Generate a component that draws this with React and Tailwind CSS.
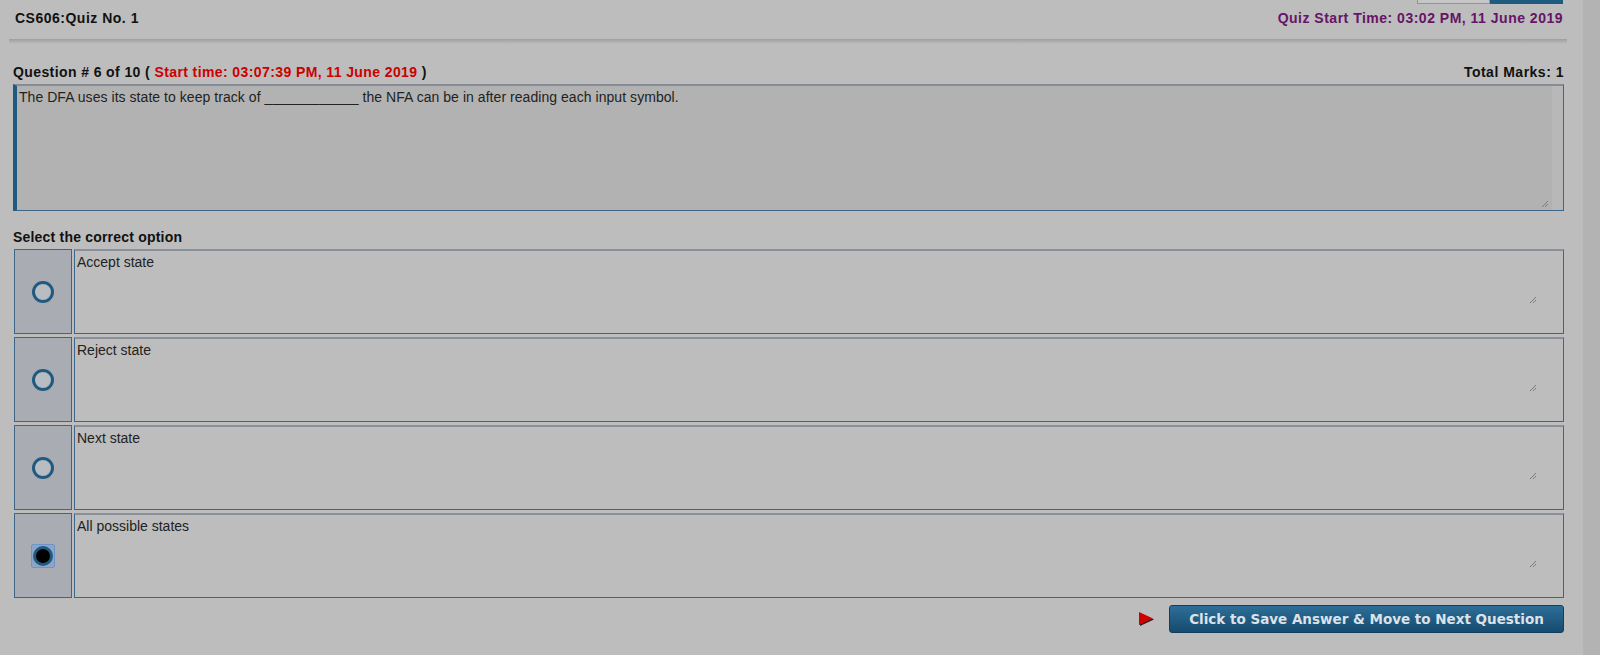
import React from 'react';

const options = ['Accept state', 'Reject state', 'Next state', 'All possible states'];

const Radio = ({ checked }) => {
    if (checked) {
        return (
            <div className="w-[24px] h-[24px] border border-[#6f94c9] bg-[#8ea6c6] rounded-[2px] flex items-center justify-center">
                <div className="w-[20px] h-[20px] rounded-full border-[3px] border-[#1f5a80] bg-black" />
            </div>
        );
    }
    return <div className="w-[22px] h-[22px] rounded-full border-[3px] border-[#1f5a80] bg-[#b9bcc0]" />;
};

const Grip = () => (
    <svg width="8" height="8" viewBox="0 0 8 8" className="absolute right-[26px] bottom-[29px]">
        <path d="M7 1 L1 7 M7 4 L4 7" stroke="#7a7a7a" strokeWidth="1" />
    </svg>
);

const App = () => {
    return (
        <div className="flex w-[1600px] h-[655px] overflow-hidden bg-[#bdbdbd] font-['Liberation_Sans',Arial,sans-serif] text-[14px] text-[#111]">
            <div className="w-[1583px] flex flex-col">
                {/* cut-off tabs at top */}
                <div className="flex justify-end pr-[20px] h-[4px]">
                    <div className="w-[73px] h-[4px] bg-[#c6c6c6] border border-t-0 border-[#8a96a3]" />
                    <div className="w-[73px] h-[4px] bg-[#1f5a80]" />
                </div>

                <div className="flex justify-between items-center pl-[15px] pr-[20px] mt-[6px] h-[16px] font-bold tracking-[0.5px]">
                    <span>CS606:Quiz No. 1</span>
                    <span className="text-[#661466]">Quiz Start Time: 03:02 PM, 11 June 2019</span>
                </div>

                <div className="ml-[9px] mt-[13px] w-[1558px] h-[5px] bg-gradient-to-b from-[#9f9f9f] to-[#bdbdbd]" />

                <div className="pl-[13px] pr-[19px] mt-[20px]">
                    <div className="flex justify-between items-center h-[16px] font-bold tracking-[0.4px]">
                        <span>
                            Question # 6 of 10 ( <span className="text-[#cc0000]">Start time: 03:07:39 PM, 11 June 2019</span> )
                        </span>
                        <span className="tracking-[0.5px]">Total Marks: 1</span>
                    </div>

                    <div className="relative mt-[4px] h-[127px] flex border-l-[4px] border-l-[#1f5a80] border-t-2 border-t-[#868c96] border-r border-b border-r-[#3d6688] border-b-[#3d6688]">
                        <div className="flex-1 bg-[#b2b2b2] px-[2px] pt-[3px] leading-[16px] tracking-[0.05px] text-[#222]">
                            The DFA uses its state to keep track of ____________ the NFA can be in after reading each input symbol.
                        </div>
                        <div className="w-[11px] bg-[#b8b8b8]" />
                        <svg width="8" height="8" viewBox="0 0 8 8" className="absolute right-[14px] bottom-[2px]">
                            <path d="M7 1 L1 7 M7 4 L4 7" stroke="#7a7a7a" strokeWidth="1" />
                        </svg>
                    </div>

                    <div className="mt-[18px] font-bold h-[16px] leading-[16px] tracking-[0.2px]">Select the correct option</div>

                    <div className="mt-[4px] flex flex-col gap-[3px] pl-[1px]">
                        {options.map((opt, i) => (
                            <div key={opt} className="flex gap-[2px] h-[85px]">
                                <div className="w-[58px] bg-[#a9adb3] border border-[#3d6688] flex items-center justify-center">
                                    <Radio checked={i === 3} />
                                </div>
                                <div className="relative flex-1 border border-[#3d6688] border-t-2 border-t-[#8a909a] px-[2px] pt-[3px] leading-[16px] text-[#222]">
                                    {opt}
                                    <Grip />
                                </div>
                            </div>
                        ))}
                    </div>

                    <div className="mt-[7px] flex justify-end items-center gap-[14px]">
                        <svg width="17" height="16" viewBox="0 0 17 16">
                            <path d="M2 2 L16 8.5 L2 15 Z" fill="#222" />
                            <path d="M1 1 L15 7.5 L1 14 Z" fill="#d00000" />
                        </svg>
                        <button className="w-[395px] h-[28px] rounded-[3px] border border-[#123f5e] bg-gradient-to-b from-[#2d6f98] to-[#174a6f] text-[#dde2e8] font-bold text-[13.5px] font-['DejaVu_Sans',Verdana,sans-serif]">
                            Click to Save Answer &amp; Move to Next Question
                        </button>
                    </div>
                </div>
            </div>
            <div className="flex-1 bg-[#b3b3b3]" />
        </div>
    );
};

export default App;
